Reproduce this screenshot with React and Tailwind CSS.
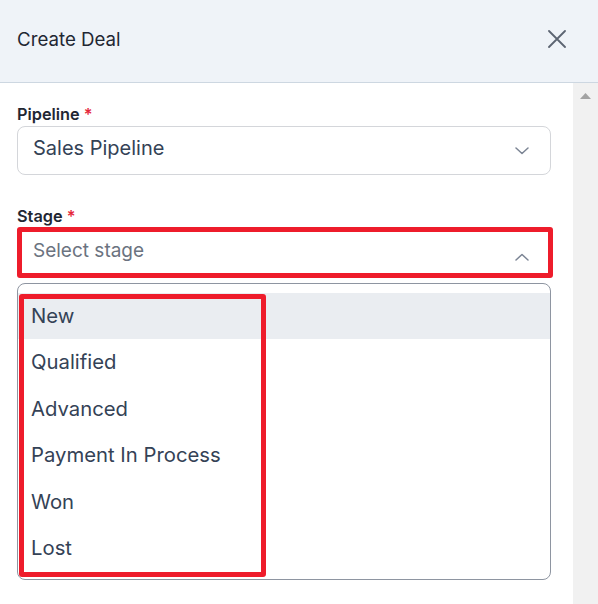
import { useState } from 'react';

const stages = ['New', 'Qualified', 'Advanced', 'Payment In Process', 'Won', 'Lost'];

function Chevron({ up = false }) {
  return (
    <svg width="14" height="8" viewBox="0 0 14 8" fill="none" className="shrink-0">
      <path
        d={up ? 'M1 7L7 1.5L13 7' : 'M1 1L7 6.5L13 1'}
        stroke="#7b8494"
        strokeWidth="1.5"
        strokeLinecap="round"
        strokeLinejoin="round"
      />
    </svg>
  );
}

export default function App() {
  const [active] = useState(0);

  return (
    <div className="w-[598px] h-[604px] flex flex-col overflow-hidden bg-white font-['Inter',sans-serif]">
      {/* Header */}
      <div className="h-[83px] shrink-0 flex items-center justify-between pl-[17px] pr-[32px] bg-[#eff3f8] border-b border-[#cdd7e1]">
        <h2 className="text-[18.7px] text-[#1f2733] pb-[1px]">Create Deal</h2>
        <button className="w-[18px] h-[18px] flex items-center justify-center mb-[4px]">
          <svg width="18" height="18" viewBox="0 0 18 18" fill="none">
            <path d="M1 1L17 17M17 1L1 17" stroke="#5c6472" strokeWidth="1.8" strokeLinecap="round" />
          </svg>
        </button>
      </div>

      <div className="flex flex-1 min-h-0">
        {/* Form body */}
        <div className="flex-1 pl-[17px] pr-[22px] pt-[21px]">
          <label className="block text-[16.3px] leading-[20px] font-semibold text-[#1f2733]">
            Pipeline <span className="text-[#e5283a]">*</span>
          </label>
          <div className="mt-[2px] h-[49px] flex items-center justify-between pl-[15px] pr-[21px] border border-[#d4d6da] rounded-[8px]">
            <span className="text-[20px] text-[#344256] pb-[5px]">Sales Pipeline</span>
            <Chevron />
          </div>

          <label className="block mt-[31px] text-[16.3px] leading-[20px] font-semibold text-[#1f2733]">
            Stage <span className="text-[#e5283a]">*</span>
          </label>
          <div className="relative mt-[2px] h-[50px] flex items-center justify-between pl-[15px] pr-[21px] border border-[#d4d6da] rounded-[8px]">
            <span className="text-[19px] text-[#6b7380] pb-[4px]">Select stage</span>
            <span className="pt-[8px]">
              <Chevron up />
            </span>
            <div className="absolute left-[-1px] top-[-2px] right-[-3px] bottom-[-1px] border-[5px] border-[#ee1c2b] rounded-[3px]" />
          </div>

          {/* Options list */}
          <div className="relative mt-[5px] h-[297px] pt-[9px] border border-[#8e95a1] rounded-[8px] overflow-hidden">
            {stages.map((s, i) => (
              <div
                key={s}
                className={`h-[46.4px] flex items-center pl-[13px] text-[20.3px] text-[#344256] ${i === active ? 'bg-[#eaedf1]' : ''}`}
              >
                {s}
              </div>
            ))}
            <div className="absolute left-[1px] top-[10px] w-[247px] h-[283px] border-[5px] border-[#ee1c2b] rounded-[3px]" />
          </div>
        </div>

        {/* Scrollbar */}
        <div className="w-[25px] shrink-0 bg-[#f1f1f1] flex justify-center pt-[10px]">
          <svg width="11" height="6" viewBox="0 0 11 6">
            <path d="M5.5 0L11 6H0Z" fill="#a3a3a3" />
          </svg>
        </div>
      </div>
    </div>
  );
}
